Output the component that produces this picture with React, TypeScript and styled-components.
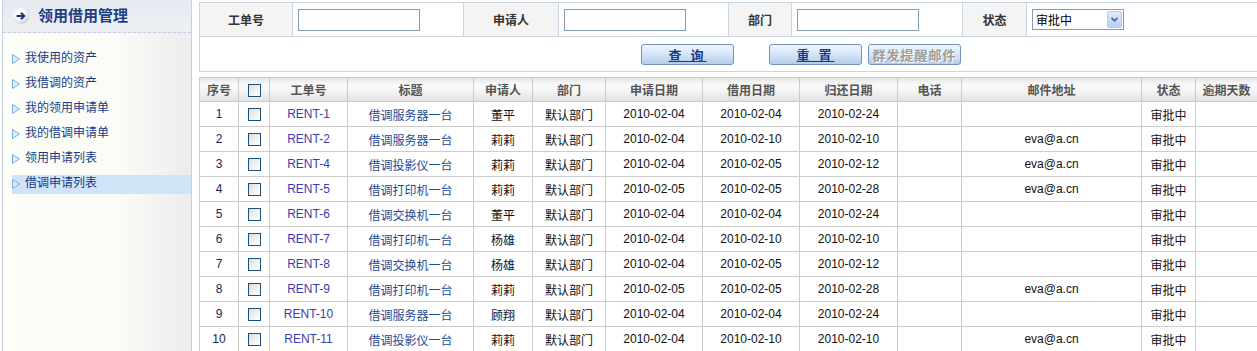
import React, { FC } from 'react'
import styled, { createGlobalStyle } from 'styled-components'

const GlobalStyle = createGlobalStyle`
  html, body {
    margin: 0;
    padding: 0;
    background: #fff;
    font-family: 'Liberation Sans', 'Noto Sans CJK SC', sans-serif;
    font-size: 12px;
    color: #000;
  }
`

const Page = styled.div`
  display: flex;
  align-items: flex-start;
  height: 100vh;
  overflow: hidden;
`

// ---------- sidebar ----------

const Sidebar = styled.div`
  flex: 0 0 190px;
  box-sizing: border-box;
  margin-left: 2px;
  height: 100%;
  border-left: 1px solid #c7d0dc;
  border-right: 1px solid #c7d0dc;
  background: linear-gradient(to right, #fefef8 0%, #fbfbf7 60%, #ececee 100%);
`

const SideHeader = styled.div`
  height: 32px;
  display: flex;
  align-items: center;
  padding-left: 9px;
  background: linear-gradient(#e6eaf0, #edf0f4);
  border-bottom: 1px dashed #c2d0e2;
`

const SideTitle = styled.span`
  margin-left: 8px;
  font-size: 15px;
  font-weight: bold;
  color: #1d3f86;
  line-height: 32px;
`

const MenuList = styled.ul`
  list-style: none;
  margin: 0;
  padding: 17px 0 0 9px;
`

const MenuEntry = styled.li<{ $active?: boolean }>`
  height: 19px;
  margin-bottom: 6px;
  display: flex;
  align-items: center;
  background: ${(p) => (p.$active ? '#cfe4f7' : 'transparent')};
  color: #163d88;
  line-height: 19px;

  > svg {
    position: relative;
    top: -1px;
  }

  > span {
    margin-left: 5px;
    position: relative;
    top: -1px;
  }
`

const GoIcon = () => (
  <svg width="18" height="18" viewBox="0 0 18 18">
    <defs>
      <radialGradient id="gb" cx="0.4" cy="0.35" r="0.7">
        <stop offset="0" stopColor="#ffffff" />
        <stop offset="0.6" stopColor="#f2f3f6" />
        <stop offset="1" stopColor="#c3c9d3" />
      </radialGradient>
    </defs>
    <circle cx="9" cy="9" r="8" fill="url(#gb)" />
    <path d="M4.5 9h7.5M9 5.8 12.3 9 9 12.2" stroke="#1f3572" strokeWidth="2" fill="none" />
  </svg>
)

const TriIcon = () => (
  <svg width="8" height="10" viewBox="0 0 8 10">
    <path d="M0.5 0.5 7.5 5 0.5 9.5Z" fill="#dbeefb" stroke="#79aedc" strokeWidth="1" />
  </svg>
)

const menuItems = ['我使用的资产', '我借调的资产', '我的领用申请单', '我的借调申请单', '领用申请列表', '借调申请列表']

// ---------- main ----------

const Main = styled.div`
  margin-left: 7px;
  padding-top: 2px;
  width: 1058px;
  flex: 0 0 1058px;
`

const SearchForm = styled.table`
  width: 1058px;
  border-collapse: collapse;
  table-layout: fixed;
  border: 1px solid #cbd5e1;
`

const FormCell = styled.td<{ $label?: boolean }>`
  border: 1px solid #cbd5e1;
  height: 33px;
  padding: ${(p) => (p.$label ? '0' : '0 0 0 5px')};
  background: ${(p) => (p.$label ? '#f4f4f4' : '#fff')};
  text-align: ${(p) => (p.$label ? 'center' : 'left')};
  font-weight: ${(p) => (p.$label ? 'bold' : 'normal')};
  color: #333;
`

const ButtonCell = styled.td`
  border: 1px solid #cbd5e1;
  height: 34px;
  padding: 0 0 0 441px;
`

const ButtonRow = styled.div`
  display: flex;
  align-items: center;
`

const TextInput = styled.input`
  box-sizing: border-box;
  width: 122px;
  height: 22px;
  border: 1px solid #7f9db9;
  margin: 0;
  padding: 0 3px;
  font: inherit;
`

const SelectBox = styled.div`
  box-sizing: border-box;
  width: 92px;
  height: 21px;
  border: 1px solid #7f9db9;
  display: flex;
  align-items: center;
  justify-content: space-between;
  padding: 0 1px 0 3px;
  color: #000;
  font-weight: normal;
`

const SelectArrow = styled.span`
  width: 15px;
  height: 17px;
  box-sizing: border-box;
  border: 1px solid #b7c9ef;
  border-radius: 2px;
  background: linear-gradient(#dfe9fd, #b9cdf7);
  display: flex;
  align-items: center;
  justify-content: center;
`

const ActionButton = styled.button<{ $muted?: boolean; $gap?: number }>`
  box-sizing: border-box;
  width: 93px;
  height: 21px;
  margin: 0 ${(p) => p.$gap ?? 0}px 0 0;
  padding: 0;
  border: 1px solid #7193bd;
  border-radius: 3px;
  background: linear-gradient(#f3f8fe 0%, #d7e6f7 45%, #b4cce9 100%);
  font-family: 'Noto Sans CJK SC', sans-serif;
  font-size: 13px;
  font-weight: bold;
  line-height: 19px;
  letter-spacing: ${(p) => (p.$muted ? '1px' : '3px')};
  color: ${(p) => (p.$muted ? '#a29d94' : '#173a8c')};
  text-shadow: ${(p) => (p.$muted ? '1px 1px 0 #ffffff' : 'none')};
`

const Underlined = styled.span`
  text-decoration: underline;
  text-underline-offset: 1px;
`

// ---------- grid ----------

const Grid = styled.table`
  margin-top: 5px;
  width: 1058px;
  border-collapse: collapse;
  table-layout: fixed;
`

const HeadCell = styled.th`
  height: 23px;
  padding: 0;
  border: 1px solid #cccccc;
  background: linear-gradient(#e7e7e7 0%, #fbfbfb 30%, #f2f2f2 60%, #e1e1e1 100%);
  color: #555;
  font-weight: bold;
  text-align: center;
  white-space: nowrap;
  overflow: hidden;
`

const Cell = styled.td<{ $tone?: 'num' | 'code' | 'title' }>`
  height: 24px;
  padding: 0;
  border: 1px solid #cccccc;
  text-align: center;
  white-space: nowrap;
  overflow: hidden;
  color: ${(p) =>
    p.$tone === 'code' ? '#3b3bb0' : p.$tone === 'title' ? '#1d4c98' : p.$tone === 'num' ? '#2b1d4a' : '#111'};
`

const CheckBox = styled.span`
  display: inline-block;
  vertical-align: middle;
  width: 13px;
  height: 13px;
  box-sizing: border-box;
  border: 1px solid #1c5180;
  background: linear-gradient(135deg, #dcdcd6 0%, #f4f4f1 60%, #ffffff 100%);
`

const columns: [string, number][] = [
  ['序号', 39],
  ['', 31],
  ['工单号', 78],
  ['标题', 126],
  ['申请人', 59],
  ['部门', 73],
  ['申请日期', 97],
  ['借用日期', 97],
  ['归还日期', 98],
  ['电话', 64],
  ['邮件地址', 180],
  ['状态', 54],
  ['逾期天数', 62],
]

type Rent = {
  code: string
  title: string
  who: string
  apply: string
  borrow: string
  back: string
  mail: string
}

const rents: Rent[] = [
  { code: 'RENT-1', title: '借调服务器一台', who: '董平', apply: '2010-02-04', borrow: '2010-02-04', back: '2010-02-24', mail: '' },
  { code: 'RENT-2', title: '借调服务器一台', who: '莉莉', apply: '2010-02-04', borrow: '2010-02-10', back: '2010-02-10', mail: 'eva@a.cn' },
  { code: 'RENT-4', title: '借调投影仪一台', who: '莉莉', apply: '2010-02-04', borrow: '2010-02-05', back: '2010-02-12', mail: 'eva@a.cn' },
  { code: 'RENT-5', title: '借调打印机一台', who: '莉莉', apply: '2010-02-05', borrow: '2010-02-05', back: '2010-02-28', mail: 'eva@a.cn' },
  { code: 'RENT-6', title: '借调交换机一台', who: '董平', apply: '2010-02-04', borrow: '2010-02-04', back: '2010-02-24', mail: '' },
  { code: 'RENT-7', title: '借调打印机一台', who: '杨雄', apply: '2010-02-04', borrow: '2010-02-10', back: '2010-02-10', mail: '' },
  { code: 'RENT-8', title: '借调交换机一台', who: '杨雄', apply: '2010-02-04', borrow: '2010-02-05', back: '2010-02-12', mail: '' },
  { code: 'RENT-9', title: '借调打印机一台', who: '莉莉', apply: '2010-02-05', borrow: '2010-02-05', back: '2010-02-28', mail: 'eva@a.cn' },
  { code: 'RENT-10', title: '借调服务器一台', who: '顾翔', apply: '2010-02-04', borrow: '2010-02-04', back: '2010-02-24', mail: '' },
  { code: 'RENT-11', title: '借调投影仪一台', who: '莉莉', apply: '2010-02-04', borrow: '2010-02-10', back: '2010-02-10', mail: 'eva@a.cn' },
]

const formCols = [93, 171, 95, 170, 63, 171, 64, 231]

const App: FC = () => (
  <Page>
    <GlobalStyle />
    <Sidebar>
      <SideHeader>
        <GoIcon />
        <SideTitle>领用借用管理</SideTitle>
      </SideHeader>
      <MenuList>
        {menuItems.map((item, i) => (
          <MenuEntry key={item} $active={i === menuItems.length - 1}>
            <TriIcon />
            <span>{item}</span>
          </MenuEntry>
        ))}
      </MenuList>
    </Sidebar>

    <Main>
      <SearchForm>
        <colgroup>
          {formCols.map((w, i) => (
            <col key={i} style={{ width: w }} />
          ))}
        </colgroup>
        <tbody>
          <tr>
            <FormCell $label>工单号</FormCell>
            <FormCell>
              <TextInput />
            </FormCell>
            <FormCell $label>申请人</FormCell>
            <FormCell>
              <TextInput />
            </FormCell>
            <FormCell $label>部门</FormCell>
            <FormCell>
              <TextInput />
            </FormCell>
            <FormCell $label>状态</FormCell>
            <FormCell>
              <SelectBox>
                审批中
                <SelectArrow>
                  <svg width="7" height="5" viewBox="0 0 7 5">
                    <path d="M0.5 0.8 3.5 3.8 6.5 0.8" stroke="#4d6185" strokeWidth="1.6" fill="none" />
                  </svg>
                </SelectArrow>
              </SelectBox>
            </FormCell>
          </tr>
          <tr>
            <ButtonCell colSpan={8}>
              <ButtonRow>
                <ActionButton $gap={35}>
                  <Underlined>查 询</Underlined>
                </ActionButton>
                <ActionButton $gap={6}>
                  <Underlined>重 置</Underlined>
                </ActionButton>
                <ActionButton $muted>群发提醒邮件</ActionButton>
              </ButtonRow>
            </ButtonCell>
          </tr>
        </tbody>
      </SearchForm>

      <Grid>
        <colgroup>
          {columns.map(([, w], i) => (
            <col key={i} style={{ width: w }} />
          ))}
        </colgroup>
        <thead>
          <tr>
            {columns.map(([label], i) => (
              <HeadCell key={i}>{i === 1 ? <CheckBox /> : label}</HeadCell>
            ))}
          </tr>
        </thead>
        <tbody>
          {rents.map((r, i) => (
            <tr key={r.code}>
              <Cell $tone="num">{i + 1}</Cell>
              <Cell>
                <CheckBox />
              </Cell>
              <Cell $tone="code">{r.code}</Cell>
              <Cell $tone="title">{r.title}</Cell>
              <Cell>{r.who}</Cell>
              <Cell>默认部门</Cell>
              <Cell>{r.apply}</Cell>
              <Cell>{r.borrow}</Cell>
              <Cell>{r.back}</Cell>
              <Cell />
              <Cell>{r.mail}</Cell>
              <Cell>审批中</Cell>
              <Cell />
            </tr>
          ))}
        </tbody>
      </Grid>
    </Main>
  </Page>
)

export default App
